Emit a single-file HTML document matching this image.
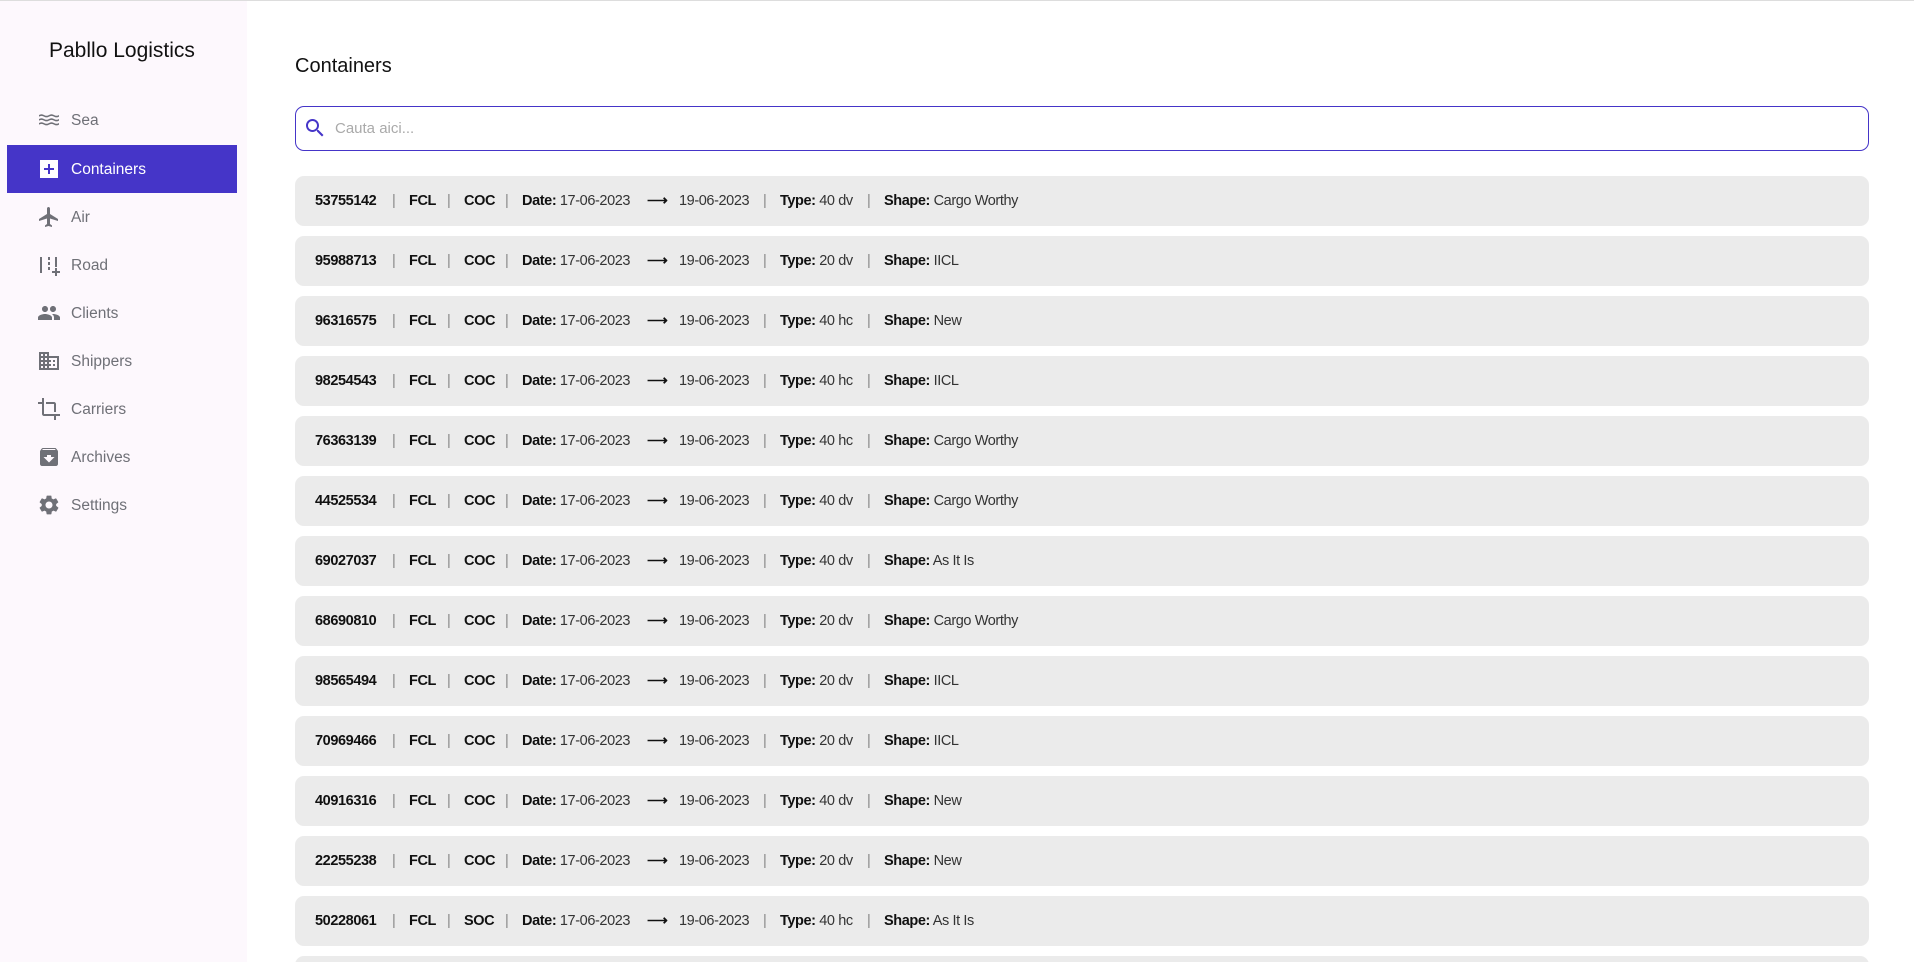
<!DOCTYPE html>
<html><head><meta charset="utf-8"><style>
*{margin:0;padding:0;box-sizing:border-box}
html,body{width:1914px;height:962px;overflow:hidden}
body{background:#fff;font-family:"Liberation Sans",sans-serif}
#w{position:relative;width:1914px;height:962px;overflow:hidden;border-top:1px solid #ddd}
.side{position:absolute;left:0;top:0;width:247px;height:962px;background:#fdf8fd}
.brand{position:absolute;left:49px;top:38px;font-size:21px;color:#111}
.nav{position:absolute;left:7px;width:230px;height:48px;color:#6f7077;font-size:15.5px}
.nav svg{position:absolute;left:30px;top:12px;width:24px;height:24px;fill:#6f7077}
.nav span{position:absolute;left:64px;top:16px}
.nav.act{background:#4535c8;color:#fff}
.nav.act svg{fill:#fff}
h1{position:absolute;left:295px;top:54px;font-size:20px;font-weight:normal;color:#111}
.search{position:absolute;left:295px;top:105px;width:1574px;height:45px;border:1.5px solid #4535c8;border-radius:9px}
.search svg{position:absolute;left:7px;top:9px;width:24px;height:24px;fill:#4535c8}
.search span{position:absolute;left:39px;top:13px;color:#aaa;font-size:15px}
.row{position:absolute;left:295px;width:1574px;height:50px;background:#ebebeb;border-radius:9px;font-size:14.5px;color:#333;letter-spacing:-0.4px}
.row s{position:absolute;top:17px;text-decoration:none;white-space:nowrap}
.row b{font-weight:bold;color:#111}
.row i{font-style:normal;color:#888}
</style></head><body><div id="w">
<div class="side">
<div class="brand">Pabllo Logistics</div>
<div class="nav" style="top:95px"><svg viewBox="0 0 24 24"><path d="M2 7q2.5-1.5 5 0t5 0 5 0 5 0v1.6q-2.5 1.5-5 0t-5 0-5 0-5 0zM2 11q2.5-1.5 5 0t5 0 5 0 5 0v1.6q-2.5 1.5-5 0t-5 0-5 0-5 0zM2 15q2.5-1.5 5 0t5 0 5 0 5 0v1.6q-2.5 1.5-5 0t-5 0-5 0-5 0z"/></svg><span>Sea</span></div>
<div class="nav act" style="top:144px"><svg viewBox="0 0 24 24"><path d="M3 3h18v18H3zM11 7v4H7v2h4v4h2v-4h4v-2h-4V7z" fill-rule="evenodd"/></svg><span>Containers</span></div>
<div class="nav" style="top:192px"><svg viewBox="0 0 24 24"><path d="M21 16v-2l-8-5V3.5C13 2.7 12.3 2 11.5 2S10 2.7 10 3.5V9l-8 5v2l8-2.5V19l-2 1.5V22l3.5-1 3.5 1v-1.5L13 19v-5.5z"/></svg><span>Air</span></div>
<div class="nav" style="top:240px"><svg viewBox="0 0 24 24"><path d="M3 4h2v16H3zM11 4h2v3h-2zM11 9h2v3h-2zM11 14h2v3h-2zM18 4h2v10h-2zM18 15h2v3h3v2h-3v3h-2v-3h-3v-2h3z"/></svg><span>Road</span></div>
<div class="nav" style="top:288px"><svg viewBox="0 0 24 24"><path d="M16 11c1.7 0 3-1.3 3-3s-1.3-3-3-3-3 1.3-3 3 1.3 3 3 3zm-8 0c1.7 0 3-1.3 3-3S9.7 5 8 5 5 6.3 5 8s1.3 3 3 3zm0 2c-2.3 0-7 1.2-7 3.5V19h14v-2.5C15 14.2 10.3 13 8 13zm8 0c-.3 0-.6 0-1 .1 1.2.8 2 1.9 2 3.4V19h6v-2.5c0-2.3-4.7-3.5-7-3.5z"/></svg><span>Clients</span></div>
<div class="nav" style="top:336px"><svg viewBox="0 0 24 24"><path d="M12 7V3H2v18h20V7H12zM6 19H4v-2h2v2zm0-4H4v-2h2v2zm0-4H4V9h2v2zm0-4H4V5h2v2zm4 12H8v-2h2v2zm0-4H8v-2h2v2zm0-4H8V9h2v2zm0-4H8V5h2v2zm10 12h-8v-2h2v-2h-2v-2h2v-2h-2V9h8v10zm-2-8h-2v2h2v-2zm0 4h-2v2h2v-2z"/></svg><span>Shippers</span></div>
<div class="nav" style="top:384px"><svg viewBox="0 0 24 24"><path d="M17 15h2V7c0-1.1-.9-2-2-2H9v2h8v8zM7 17V1H5v4H1v2h4v10c0 1.1.9 2 2 2h10v4h2v-4h4v-2H7z"/></svg><span>Carriers</span></div>
<div class="nav" style="top:432px"><svg viewBox="0 0 24 24"><path d="M20.5 5.2 19.1 3.5C18.9 3.2 18.5 3 18 3H6c-.5 0-.9.2-1.2.5L3.5 5.2C3.2 5.6 3 6 3 6.5V19c0 1.1.9 2 2 2h14c1.1 0 2-.9 2-2V6.5c0-.5-.2-.9-.5-1.3zM12 17.5 6.5 12H10v-2h4v2h3.5L12 17.5zM5.1 5l.8-1h12l.9 1H5.1z"/></svg><span>Archives</span></div>
<div class="nav" style="top:480px"><svg viewBox="0 0 24 24"><path d="M19.1 12.9c0-.3.1-.6.1-.9s0-.6-.1-.9l2-1.6c.2-.1.2-.4.1-.6l-1.9-3.3c-.1-.2-.4-.3-.6-.2l-2.4 1c-.5-.4-1-.7-1.6-.9L14.4 3c0-.2-.2-.4-.5-.4h-3.8c-.2 0-.4.2-.5.4l-.4 2.5c-.6.2-1.1.6-1.6.9l-2.4-1c-.2-.1-.5 0-.6.2L2.7 8.9c-.1.2-.1.5.1.6l2 1.6c0 .3-.1.6-.1.9s0 .6.1.9l-2 1.6c-.2.1-.2.4-.1.6l1.9 3.3c.1.2.4.3.6.2l2.4-1c.5.4 1 .7 1.6.9l.4 2.5c0 .2.2.4.5.4h3.8c.2 0 .4-.2.5-.4l.4-2.5c.6-.2 1.1-.6 1.6-.9l2.4 1c.2.1.5 0 .6-.2l1.9-3.3c.1-.2.1-.5-.1-.6l-2-1.6zM12 15.5c-1.9 0-3.5-1.6-3.5-3.5s1.6-3.5 3.5-3.5 3.5 1.6 3.5 3.5-1.6 3.5-3.5 3.5z"/></svg><span>Settings</span></div>
</div>
<h1>Containers</h1>
<div class="search"><svg viewBox="0 0 24 24"><path d="M15.5 14h-.8l-.3-.3c1-1.1 1.6-2.6 1.6-4.2C16 5.9 13.1 3 9.5 3S3 5.9 3 9.5 5.9 16 9.5 16c1.6 0 3.1-.6 4.2-1.6l.3.3v.8l5 5 1.5-1.5-5-5zm-6 0C7 14 5 12 5 9.5S7 5 9.5 5 14 7 14 9.5 12 14 9.5 14z"/></svg><span>Cauta aici...</span></div>
<div id="rows"></div>
</div>
<script>
var d=[["53755142","COC","40 dv","Cargo Worthy"],["95988713","COC","20 dv","IICL"],["96316575","COC","40 hc","New"],["98254543","COC","40 hc","IICL"],["76363139","COC","40 hc","Cargo Worthy"],["44525534","COC","40 dv","Cargo Worthy"],["69027037","COC","40 dv","As It Is"],["68690810","COC","20 dv","Cargo Worthy"],["98565494","COC","20 dv","IICL"],["70969466","COC","20 dv","IICL"],["40916316","COC","40 dv","New"],["22255238","COC","20 dv","New"],["50228061","SOC","40 hc","As It Is"],["","","",""]];
var h="";
d.forEach(function(r,k){
var t=175+60*k;
h+='<div class="row" style="top:'+t+'px">';
if(r[0]){
var x=[20,97,114,152,169,210,227,352,384,468,485,572,589];
var o=['<b>'+r[0]+'</b>','<i>|</i>','<b>FCL</b>','<i>|</i>','<b>'+r[1]+'</b>','<i>|</i>','<b>Date:</b> 17-06-2023','<b>&#10230;</b>','19-06-2023','<i>|</i>','<b>Type:</b> '+r[2],'<i>|</i>','<b>Shape:</b> '+r[3]];
for(var i=0;i<o.length;i++)h+='<s style="left:'+x[i]+'px">'+o[i]+'</s>';
}
h+='</div>';
});
document.getElementById('rows').innerHTML=h;
</script>
</body></html>
